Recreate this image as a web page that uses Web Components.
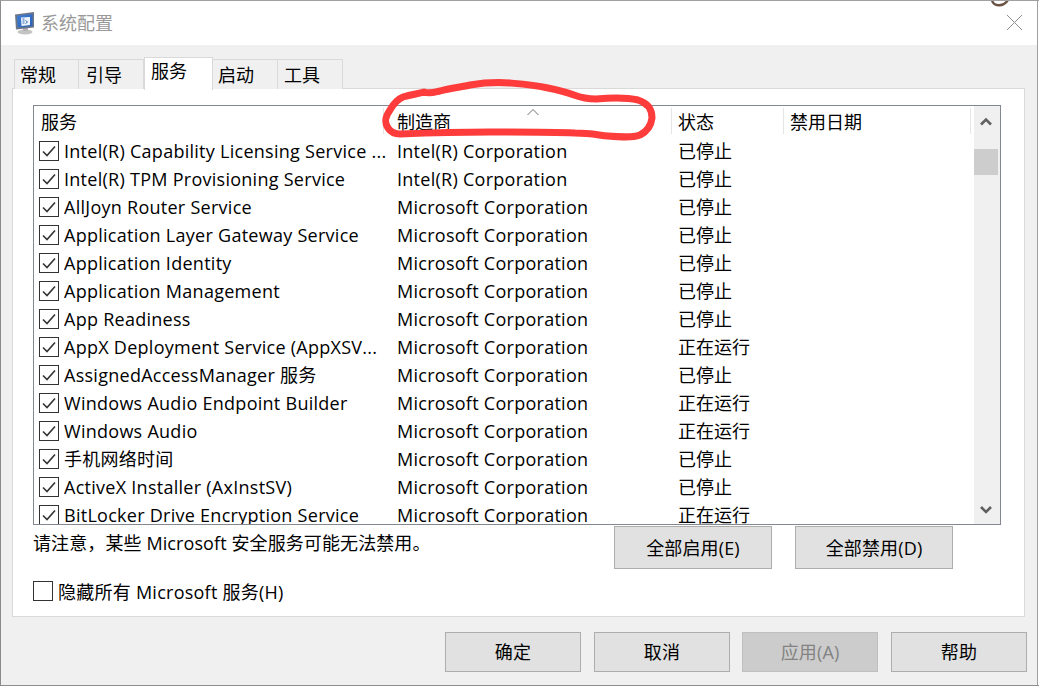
<!DOCTYPE html>
<html lang="zh"><head><meta charset="utf-8"><title>系统配置</title>
<style>
html,body{margin:0;padding:0;background:#f0f0f0;overflow:hidden}
body{font:18px "Open Sans","Noto Sans CJK SC",sans-serif;color:#000}
</style></head><body>
<sys-window>
  <svc-list></svc-list>
</sys-window>
<script>
const FONT='"Open Sans","Noto Sans CJK SC",sans-serif';
class WinCheck extends HTMLElement{
  constructor(){super();const c=this.hasAttribute('checked');this.attachShadow({mode:'open'}).innerHTML=`<style>
  :host{display:block;width:20px;height:20px;box-sizing:border-box;border:1px solid #333;background:#fff;flex:none}
  svg{display:block;width:18px;height:18px}</style>`+(c?`<svg viewBox="0 0 18 18"><path d="M3 9.5L7 13.5L15 4.5" fill="none" stroke="#333" stroke-width="1.6"/></svg>`:'');}
}
customElements.define('win-check',WinCheck);
class WinButton extends HTMLElement{
  constructor(){super();this.attachShadow({mode:'open'}).innerHTML=`<style>
  :host{display:flex;align-items:center;justify-content:center;box-sizing:border-box;height:var(--h,40px);width:var(--w,136px);background:#e1e1e1;border:1px solid #adadad;font-size:18px;white-space:nowrap;flex:none;padding-bottom:2px;letter-spacing:.15px}
  :host([disabled]){background:#cccccc;border-color:#bfbfbf;color:#838383}</style><slot></slot>`;}
}
customElements.define('win-button',WinButton);
class WinTab extends HTMLElement{
  constructor(){super();this.attachShadow({mode:'open'}).innerHTML=`<style>
  :host{display:block;box-sizing:border-box;width:65px;height:30px;background:#f0f0f0;border:1px solid #d9d9d9;border-bottom:0;border-left:0;padding-left:6px;font-size:18px;line-height:30px;margin-top:2px;flex:none}
  :host(:first-child){border-left:1px solid #d9d9d9;padding-left:5px}
  :host(:nth-child(2)){padding-left:7px}
  :host(:nth-child(4)){padding-left:5px}
  :host([active]){background:#fff;width:69px;height:33px;margin-top:0;margin-bottom:-1px;position:relative;z-index:1;border-left:1px solid #d9d9d9;line-height:26px}</style><slot></slot>`;}
}
customElements.define('win-tab',WinTab);
class SvcRow extends HTMLElement{
  constructor(){super();const a=n=>this.getAttribute(n)||'';this.attachShadow({mode:'open'}).innerHTML=`<style>
  :host{display:grid;grid-template-columns:30px 333px 281px 1fr;height:28px;align-items:center;font-size:18px;white-space:nowrap;line-height:28px}
  win-check{margin-left:5px}
  div{overflow:hidden}
  .l{letter-spacing:.27px}</style><win-check checked></win-check><div class="l">${a('name')}</div><div class="l">${a('maker')}</div><div>${a('state')}</div>`;}
}
customElements.define('svc-row',SvcRow);
const ROWS=[
['Intel(R) Capability Licensing Service ...','Intel(R) Corporation','已停止'],
['Intel(R) TPM Provisioning Service','Intel(R) Corporation','已停止'],
['AllJoyn Router Service','Microsoft Corporation','已停止'],
['Application Layer Gateway Service','Microsoft Corporation','已停止'],
['Application Identity','Microsoft Corporation','已停止'],
['Application Management','Microsoft Corporation','已停止'],
['App Readiness','Microsoft Corporation','已停止'],
['AppX Deployment Service (AppXSV...','Microsoft Corporation','正在运行'],
['AssignedAccessManager 服务','Microsoft Corporation','已停止'],
['Windows Audio Endpoint Builder','Microsoft Corporation','正在运行'],
['Windows Audio','Microsoft Corporation','正在运行'],
['手机网络时间','Microsoft Corporation','已停止'],
['ActiveX Installer (AxInstSV)','Microsoft Corporation','已停止'],
['BitLocker Drive Encryption Service','Microsoft Corporation','正在运行']];
class SvcList extends HTMLElement{
  constructor(){super();this.attachShadow({mode:'open'}).innerHTML=`<style>
  :host{display:flex;box-sizing:border-box;width:968px;height:420px;border:1px solid #828790;background:#fff;overflow:hidden;flex:none}
  .main{flex:1;min-width:0;overflow:hidden}
  .head{display:grid;grid-template-columns:350px 288px 112px 187px;height:31px;font-size:18px}
  .head div{box-sizing:border-box;height:26px;margin-top:2px;border-right:1px solid #e5e5e5;padding-left:7px;line-height:28px;position:relative;white-space:nowrap}
  .head .mk{padding-left:13px}
  .head .st{padding-left:6px}
  .head .dt{padding-left:6px}
  .head svg{position:absolute;left:142px;top:0}
  .bar{width:26px;background:#f0f0f0;flex:none;position:relative;display:flex;flex-direction:column}
  .bar svg{display:block;flex:none}
  .thumb{width:24px;height:26px;background:#cdcdcd;margin-top:14px;flex:none}
  .sp{flex:1}
  </style>
  <div class="main">
    <div class="head"><div>服务</div><div class="mk">制造商<svg width="14" height="8" viewBox="0 0 14 8"><path d="M1.5 7L7 1.5L12.5 7" fill="none" stroke="#707070"/></svg></div><div class="st">状态</div><div class="dt">禁用日期</div></div>
    <div class="rows">${ROWS.map(r=>`<svc-row name="${r[0]}" maker="${r[1]}" state="${r[2]}"></svc-row>`).join('')}</div>
  </div>
  <div class="bar">
    <svg width="24" height="27" viewBox="0 0 24 27" style="margin-top:2px"><path d="M7 16.5L12 11.5L17 16.5" fill="none" stroke="#606060" stroke-width="2.6"/></svg>
    <div class="thumb"></div><div class="sp"></div>
    <svg width="24" height="26" viewBox="0 0 24 26"><path d="M7 9L12 14L17 9" fill="none" stroke="#606060" stroke-width="2.6"/></svg>
  </div>`;}
}
class SysWindow extends HTMLElement{
  constructor(){super();this.attachShadow({mode:'open'}).innerHTML=`<style>
  :host{display:flex;flex-direction:column;box-sizing:border-box;width:1039px;height:686px;border-left:1px solid #8c8c8c;border-top:1px solid #a0a0a0;border-bottom:1px solid #8c8c8c;background:#f0f0f0;position:relative;overflow:hidden;font-family:${FONT}}
  .title{height:44px;background:#fff;display:flex;align-items:center;color:#999;font-size:18px;flex:none;padding-left:13px}
  .title span{margin-left:6px;margin-top:-3px}
  .x{margin-left:auto;margin-right:16px;margin-top:-1px}
  .tabs{display:flex;margin:12px 0 0 13px;height:31px;flex:none;position:relative;z-index:1}
  .panel{box-sizing:border-box;width:1013px;height:529px;margin-left:11px;background:#fff;border:1px solid #d9d9d9;padding:16px 0 0 20px;flex:none;display:flex;flex-direction:column}
  .mid{display:flex;height:45px;margin-top:1px;flex:none}
  .note{width:581px;line-height:36px;white-space:nowrap;height:36px;letter-spacing:.1px;margin-top:-1px}
  .mid win-button{--w:158px;--h:43px}
  .mid win-button+win-button{margin-left:23px}
  .hide{display:flex;align-items:center;gap:5px;margin-top:10px;height:20px;white-space:nowrap;letter-spacing:.25px}
  .foot{display:flex;margin:15px 0 0 444px;flex:none}
  .foot win-button{margin-right:13px}
  .foot win-button:nth-child(2){margin-right:12px}
  .rail{position:absolute;right:1px;top:0;bottom:0;width:1px;background:#a0a0a0;z-index:2}
  .rail2{position:absolute;right:0;top:0;bottom:0;width:1px;background:#fff;z-index:2}
  .ink{position:absolute;left:-1px;top:-1px;pointer-events:none;z-index:3}
  </style>
  <div class="title">
    <svg width="21" height="24" viewBox="0 0 21 24"><defs><linearGradient id="g" x1="0" y1="0" x2="1" y2="1"><stop offset="0" stop-color="#3f7fd8"/><stop offset="1" stop-color="#2a5fb4"/></linearGradient></defs>
      <ellipse cx="11" cy="21" rx="7.5" ry="2.4" fill="#c4c4c4"/><path d="M9 17h5v3H9z" fill="#b4b4b4"/>
      <path d="M1 3.5L20 1V16.5L2 18.5Z" fill="#6a7688"/><path d="M3 4.8L18.5 3V15L3.8 16.5Z" fill="url(#g)"/>
      <path d="M7 6.5L16 6V14L7.5 15Z" fill="#eef4fb"/><path d="M8.5 8h2M8.5 10h2M8.5 12h2M11.5 9.5l2 1.5-2 1.5" stroke="#3b6fb8" fill="none"/></svg>
    <span>系统配置</span>
    <svg class="x" width="17" height="17" viewBox="0 0 17 17"><path d="M1 1L16 16M16 1L1 16" stroke="#8f8f8f" fill="none"/></svg>
  </div>
  <div class="tabs"><win-tab>常规</win-tab><win-tab>引导</win-tab><win-tab active>服务</win-tab><win-tab>启动</win-tab><win-tab>工具</win-tab></div>
  <div class="panel">
    <slot></slot>
    <div class="mid"><div class="note">请注意，某些 Microsoft 安全服务可能无法禁用。</div><win-button>全部启用(E)</win-button><win-button>全部禁用(D)</win-button></div>
    <div class="hide"><win-check></win-check><span>隐藏所有 Microsoft 服务(H)</span></div>
  </div>
  <div class="foot"><win-button>确定</win-button><win-button>取消</win-button><win-button disabled>应用(A)</win-button><win-button>帮助</win-button></div>
  <div class="rail"></div><div class="rail2"></div>
  <svg class="ink" width="1039" height="686" viewBox="0 0 1039 686">
    <path d="M388 128C384 122 385 117 390 110C394 103 398 99 403 97C412 94 418 94 424 92C430 94 435 92 440 91C450 88 462 87 470 85C482 83 495 82 510 83C522 84 535 85 548 88C558 90 566 92 574 95C582 98 588 99 596 99C608 98 625 97 638 100C648 103 652 110 652 118C651 126 646 132 640 135C632 138 620 137 608 136C598 135 590 133 575 133C550 132 520 132 490 132C460 132 425 133 400 134C394 134 390 131 388 128Z" fill="none" stroke="#fe3c3c" stroke-width="7" stroke-linejoin="round"/>
    <path d="M992 0C993 6 1003 8 1008 0" fill="none" stroke="#6b5344" stroke-width="2.4"/>
  </svg>`;}
}
customElements.define('sys-window',SysWindow);
customElements.define('svc-list',SvcList);
</script>
</body></html>
